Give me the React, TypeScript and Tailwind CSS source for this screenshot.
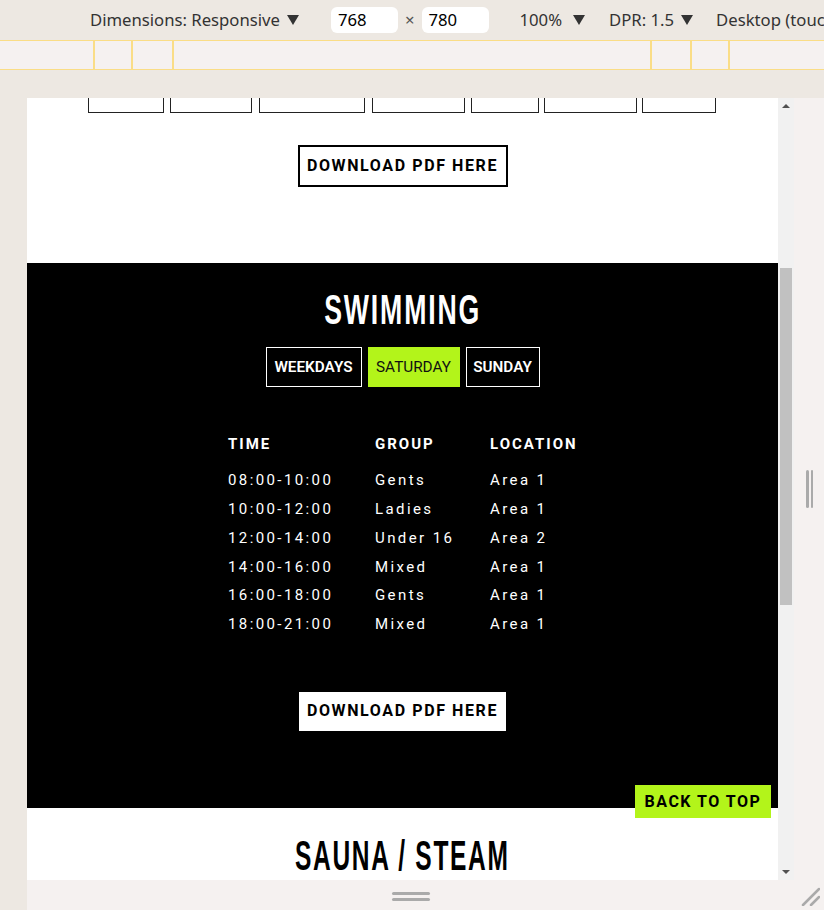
const rows = [
  { time: "08:00-10:00", group: "Gents", location: "Area 1" },
  { time: "10:00-12:00", group: "Ladies", location: "Area 1" },
  { time: "12:00-14:00", group: "Under 16", location: "Area 2" },
  { time: "14:00-16:00", group: "Mixed", location: "Area 1" },
  { time: "16:00-18:00", group: "Gents", location: "Area 1" },
  { time: "18:00-21:00", group: "Mixed", location: "Area 1" },
];

// [left, right] of the cut-off cells of the previous table, viewport coords
const boxes: [number, number][] = [
  [61, 137],
  [143, 225],
  [232, 338],
  [345, 438],
  [444, 512],
  [517, 610],
  [615, 689],
];

const markers = [93, 131, 172, 650, 690, 728];

function Caret() {
  return <div className="shrink-0 w-0 h-0 border-x-[6px] border-x-transparent border-t-[10px] border-t-[#333]" />;
}

function Toolbar() {
  return (
    <div className="h-[40px] flex items-center text-[16.7px] text-[#333] font-['Noto_Sans',sans-serif] bg-[#ede8e2] whitespace-nowrap overflow-hidden">
      <span className="shrink-0 ml-[90px]">Dimensions: Responsive</span>
      <div className="shrink-0 ml-[7px]"><Caret /></div>
      <div className="shrink-0 ml-[32px] w-[67px] h-[26px] bg-white rounded-[6px] flex items-center pl-[7px] text-black">768</div>
      <span className="shrink-0 mx-[7px] text-[#555]">×</span>
      <div className="shrink-0 w-[67px] h-[26px] bg-white rounded-[6px] flex items-center pl-[7px] text-black">780</div>
      <span className="shrink-0 ml-[31px]">100%</span>
      <div className="shrink-0 ml-[11px]"><Caret /></div>
      <span className="shrink-0 ml-[24px]">DPR: 1.5</span>
      <div className="shrink-0 ml-[7px]"><Caret /></div>
      <span className="shrink-0 ml-[23px]">Desktop (touch)</span>
    </div>
  );
}

function MediaBar() {
  return (
    <div className="relative h-[30px] bg-[#f5f1f0] border-y border-[#fadd86]">
      {markers.map((x) => (
        <div key={x} className="absolute top-0 bottom-0 w-[2px] bg-[#fadd86]" style={{ left: x }} />
      ))}
    </div>
  );
}

function Tab({ label, width, active }: { label: string; width: number; active?: boolean }) {
  return (
    <div
      style={{ width }}
      className={
        active
          ? "h-[40px] flex items-center justify-center border border-[#b3f41a] bg-[#b3f41a] text-[#111] text-[15.3px] font-normal"
          : "h-[40px] flex items-center justify-center border border-white text-white text-[15.3px] font-semibold"
      }
    >
      {label}
    </div>
  );
}

function Viewport() {
  return (
    <div className="relative w-[751px] h-[782px] overflow-hidden bg-white font-['Roboto',sans-serif]">
      {/* bottom of the previous table */}
      <div className="h-[165px] flex flex-col">
        <div className="flex h-[15px]">
          {boxes.map(([l, r], i) => (
            <div
              key={i}
              className="h-full border-x border-b border-[#222]"
              style={{ width: r - l, marginLeft: i === 0 ? l : l - boxes[i - 1][1] }}
            />
          ))}
        </div>
        <div className="mt-[32px] mx-auto w-[210px] h-[42px] border-2 border-black flex items-center justify-center text-[16px] font-bold tracking-[1.6px] text-black">
          DOWNLOAD PDF HERE
        </div>
      </div>

      {/* swimming */}
      <div className="h-[545px] bg-black flex flex-col items-center">
        <h2 className="mt-[24px] h-[44px] text-white text-[43px] leading-[44px] font-bold tracking-[3px] font-['Liberation_Sans',sans-serif] scale-x-[0.62]">
          SWIMMING
        </h2>
        <div className="mt-[16px] flex gap-[6px]">
          <Tab label="WEEKDAYS" width={96} />
          <Tab label="SATURDAY" width={92} active />
          <Tab label="SUNDAY" width={74} />
        </div>
        <div className="mt-[44px] w-[349px] text-white text-[15px]">
          <div className="grid grid-cols-[147px_115px_87px] font-bold tracking-[2px] h-[26px] items-center">
            <span>TIME</span>
            <span>GROUP</span>
            <span>LOCATION</span>
          </div>
          <div className="mt-[9px] flex flex-col">
            {rows.map((r) => (
              <div key={r.time} className="grid grid-cols-[147px_115px_87px] tracking-[2.4px] h-[28.8px] items-center">
                <span>{r.time}</span>
                <span>{r.group}</span>
                <span>{r.location}</span>
              </div>
            ))}
          </div>
        </div>
        <div className="mt-[53px] w-[207px] h-[39px] bg-white flex items-center justify-center text-[16px] font-bold tracking-[1.6px] text-black">
          DOWNLOAD PDF HERE
        </div>
      </div>

      {/* sauna */}
      <div className="flex flex-col items-center">
        <h2 className="mt-[25px] h-[44px] text-black text-[43px] leading-[44px] font-bold tracking-[3px] font-['Liberation_Sans',sans-serif] scale-x-[0.57] whitespace-nowrap">
          SAUNA / STEAM
        </h2>
      </div>

      {/* fixed back to top */}
      <div className="absolute right-[7px] bottom-[62px] w-[136px] h-[33px] bg-[#b3f41a] flex items-center justify-center text-[16px] font-bold tracking-[1.5px] text-black">
        BACK TO TOP
      </div>
    </div>
  );
}

function Scrollbar() {
  return (
    <div className="w-[16px] h-[782px] bg-[#f1f1f1] flex flex-col items-center">
      <div className="h-[16px] flex items-center justify-center">
        <div className="w-0 h-0 border-x-[4px] border-x-transparent border-b-[4px] border-b-[#505050]" />
      </div>
      <div className="mt-[154px] w-[12px] h-[337px] bg-[#c1c1c1]" />
      <div className="flex-1" />
      <div className="h-[16px] flex items-center justify-center">
        <div className="w-0 h-0 border-x-[4px] border-x-transparent border-t-[4px] border-t-[#505050]" />
      </div>
    </div>
  );
}

export default function App() {
  return (
    <div className="w-[824px] h-[910px] bg-[#ede8e2] flex flex-col overflow-hidden">
      <Toolbar />
      <MediaBar />
      <div className="h-[28px]" />
      <div className="flex">
        <div className="w-[27px]" />
        <Viewport />
        <Scrollbar />
        <div className="flex-1 bg-[#f5f1f0] flex items-center justify-center">
          <div className="flex gap-[2px] ml-[1px]">
            <div className="w-[2.5px] h-[38px] rounded-full bg-[#aaa]" />
            <div className="w-[2.5px] h-[38px] rounded-full bg-[#aaa]" />
          </div>
        </div>
      </div>
      <div className="flex-1 flex">
        <div className="w-[27px]" />
        <div className="flex-1 bg-[#f5f1f0] relative flex flex-col items-center pt-[12px] gap-[3px]">
          <div className="w-[38px] h-[3px] rounded-full bg-[#aaa] mr-[29px]" />
          <div className="w-[38px] h-[3px] rounded-full bg-[#aaa] mr-[29px]" />
          <svg className="absolute right-[4px] bottom-[4px]" width="20" height="20" viewBox="0 0 20 20">
            <path d="M19 3 L3 19 M19 11 L11 19" stroke="#aaa" strokeWidth="2.5" strokeLinecap="round" />
          </svg>
        </div>
      </div>
    </div>
  );
}
